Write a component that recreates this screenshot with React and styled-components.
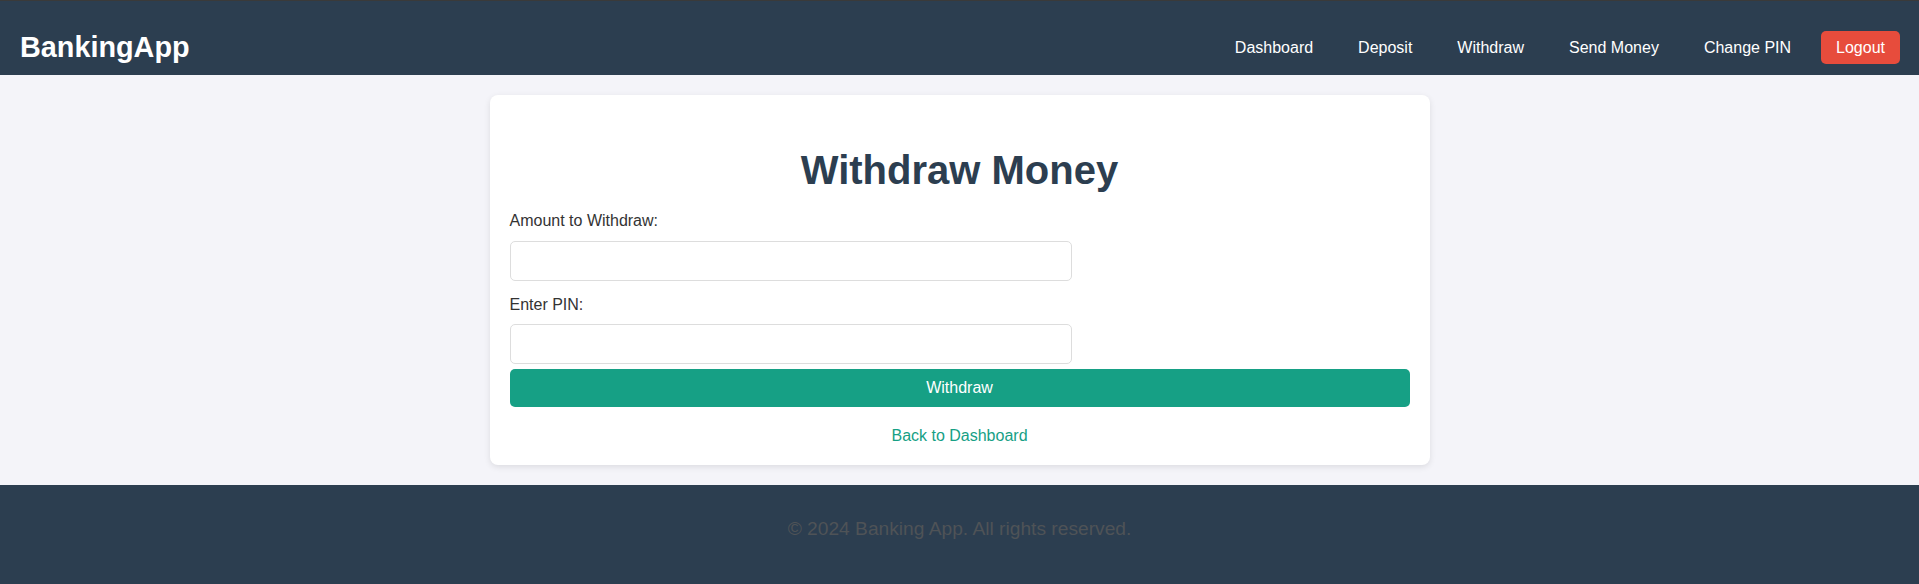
import React from 'react';
import styled, { createGlobalStyle } from 'styled-components';

const GlobalStyle = createGlobalStyle`
  * {
    box-sizing: content-box;
  }

  body {
    margin: 0;
    font-family: "Liberation Sans", Arial, sans-serif;
    font-size: 16px;
    background: #f4f4f9;
    color: #333;
  }
`;

const Navbar = styled.header`
  background: #2c3e50;
  border-top: 1px solid #3a3a3a;
  padding: 30px 19px 11px 20px;
  display: flex;
  align-items: center;
  justify-content: space-between;
`;

const Brand = styled.h1`
  margin: 0;
  font-size: 28.8px;
  font-weight: 700;
  color: #fff;
  line-height: 33px;
`;

const Nav = styled.nav`
  display: flex;
  align-items: center;
`;

const NavLink = styled.a`
  margin-left: 15px;
  padding: 7.5px 15px;
  line-height: 18px;
  font-size: 16px;
  color: #fff;
  text-decoration: none;
  border-radius: 5px;
  background: ${(p) => (p.$danger ? '#e74c3c' : 'transparent')};
  cursor: pointer;
`;

const Main = styled.main`
  padding: 20px 0 20px;
`;

const Card = styled.section`
  max-width: 900px;
  margin: 0 auto;
  padding: 20px;
  background: #fff;
  border-radius: 8px;
  box-shadow: 0 2px 6px rgba(0, 0, 0, 0.1);
`;

const Title = styled.h2`
  margin: 32px 0 19px;
  font-size: 40px;
  font-weight: 700;
  line-height: 46px;
  text-align: center;
  color: #2c3e50;
`;

const Form = styled.form`
  margin: 0;
`;

const Label = styled.label`
  display: block;
  margin: ${(p) => (p.$first ? '0' : '14.5px')} 0 ${(p) => (p.$first ? '11px' : '10px')};
  font-size: 16px;
  line-height: 18px;
  color: #333;
`;

const Input = styled.input`
  display: block;
  width: 60%;
  margin: 0 0 5px;
  padding: 10px;
  border: 1px solid #ddd;
  border-radius: 5px;
  font-family: inherit;
  font-size: 16px;
  line-height: 18px;
  height: 18px;
  background: #fff;
  outline: none;
`;

const SubmitButton = styled.button`
  display: block;
  width: 100%;
  box-sizing: border-box;
  padding: 10px;
  border: none;
  border-radius: 5px;
  background: #16a085;
  color: #fff;
  font-family: inherit;
  font-size: 16px;
  line-height: 18px;
  cursor: pointer;
`;

const BackRow = styled.p`
  margin: 20px 0 0;
  text-align: center;
  line-height: 18px;
`;

const BackLink = styled.a`
  color: #16a085;
  text-decoration: none;
  font-size: 16px;
`;

const Footer = styled.footer`
  background: #2c3e50;
  padding: 33px 0 48px;
  text-align: center;
`;

const FooterText = styled.p`
  margin: 0;
  font-size: 19.2px;
  line-height: 22px;
  color: #4f5357;
`;

const links = ['Dashboard', 'Deposit', 'Withdraw', 'Send Money', 'Change PIN'];

export default function App() {
  return (
    <>
      <GlobalStyle />
      <Navbar>
        <Brand>BankingApp</Brand>
        <Nav>
          {links.map((l) => (
            <NavLink key={l}>{l}</NavLink>
          ))}
          <NavLink $danger>Logout</NavLink>
        </Nav>
      </Navbar>
      <Main>
        <Card>
          <Title>Withdraw Money</Title>
          <Form onSubmit={(e) => e.preventDefault()}>
            <Label $first htmlFor="amount">Amount to Withdraw:</Label>
            <Input id="amount" type="number" />
            <Label htmlFor="pin">Enter PIN:</Label>
            <Input id="pin" type="password" />
            <SubmitButton type="submit">Withdraw</SubmitButton>
          </Form>
          <BackRow>
            <BackLink>Back to Dashboard</BackLink>
          </BackRow>
        </Card>
      </Main>
      <Footer>
        <FooterText>© 2024 Banking App. All rights reserved.</FooterText>
      </Footer>
    </>
  );
}
